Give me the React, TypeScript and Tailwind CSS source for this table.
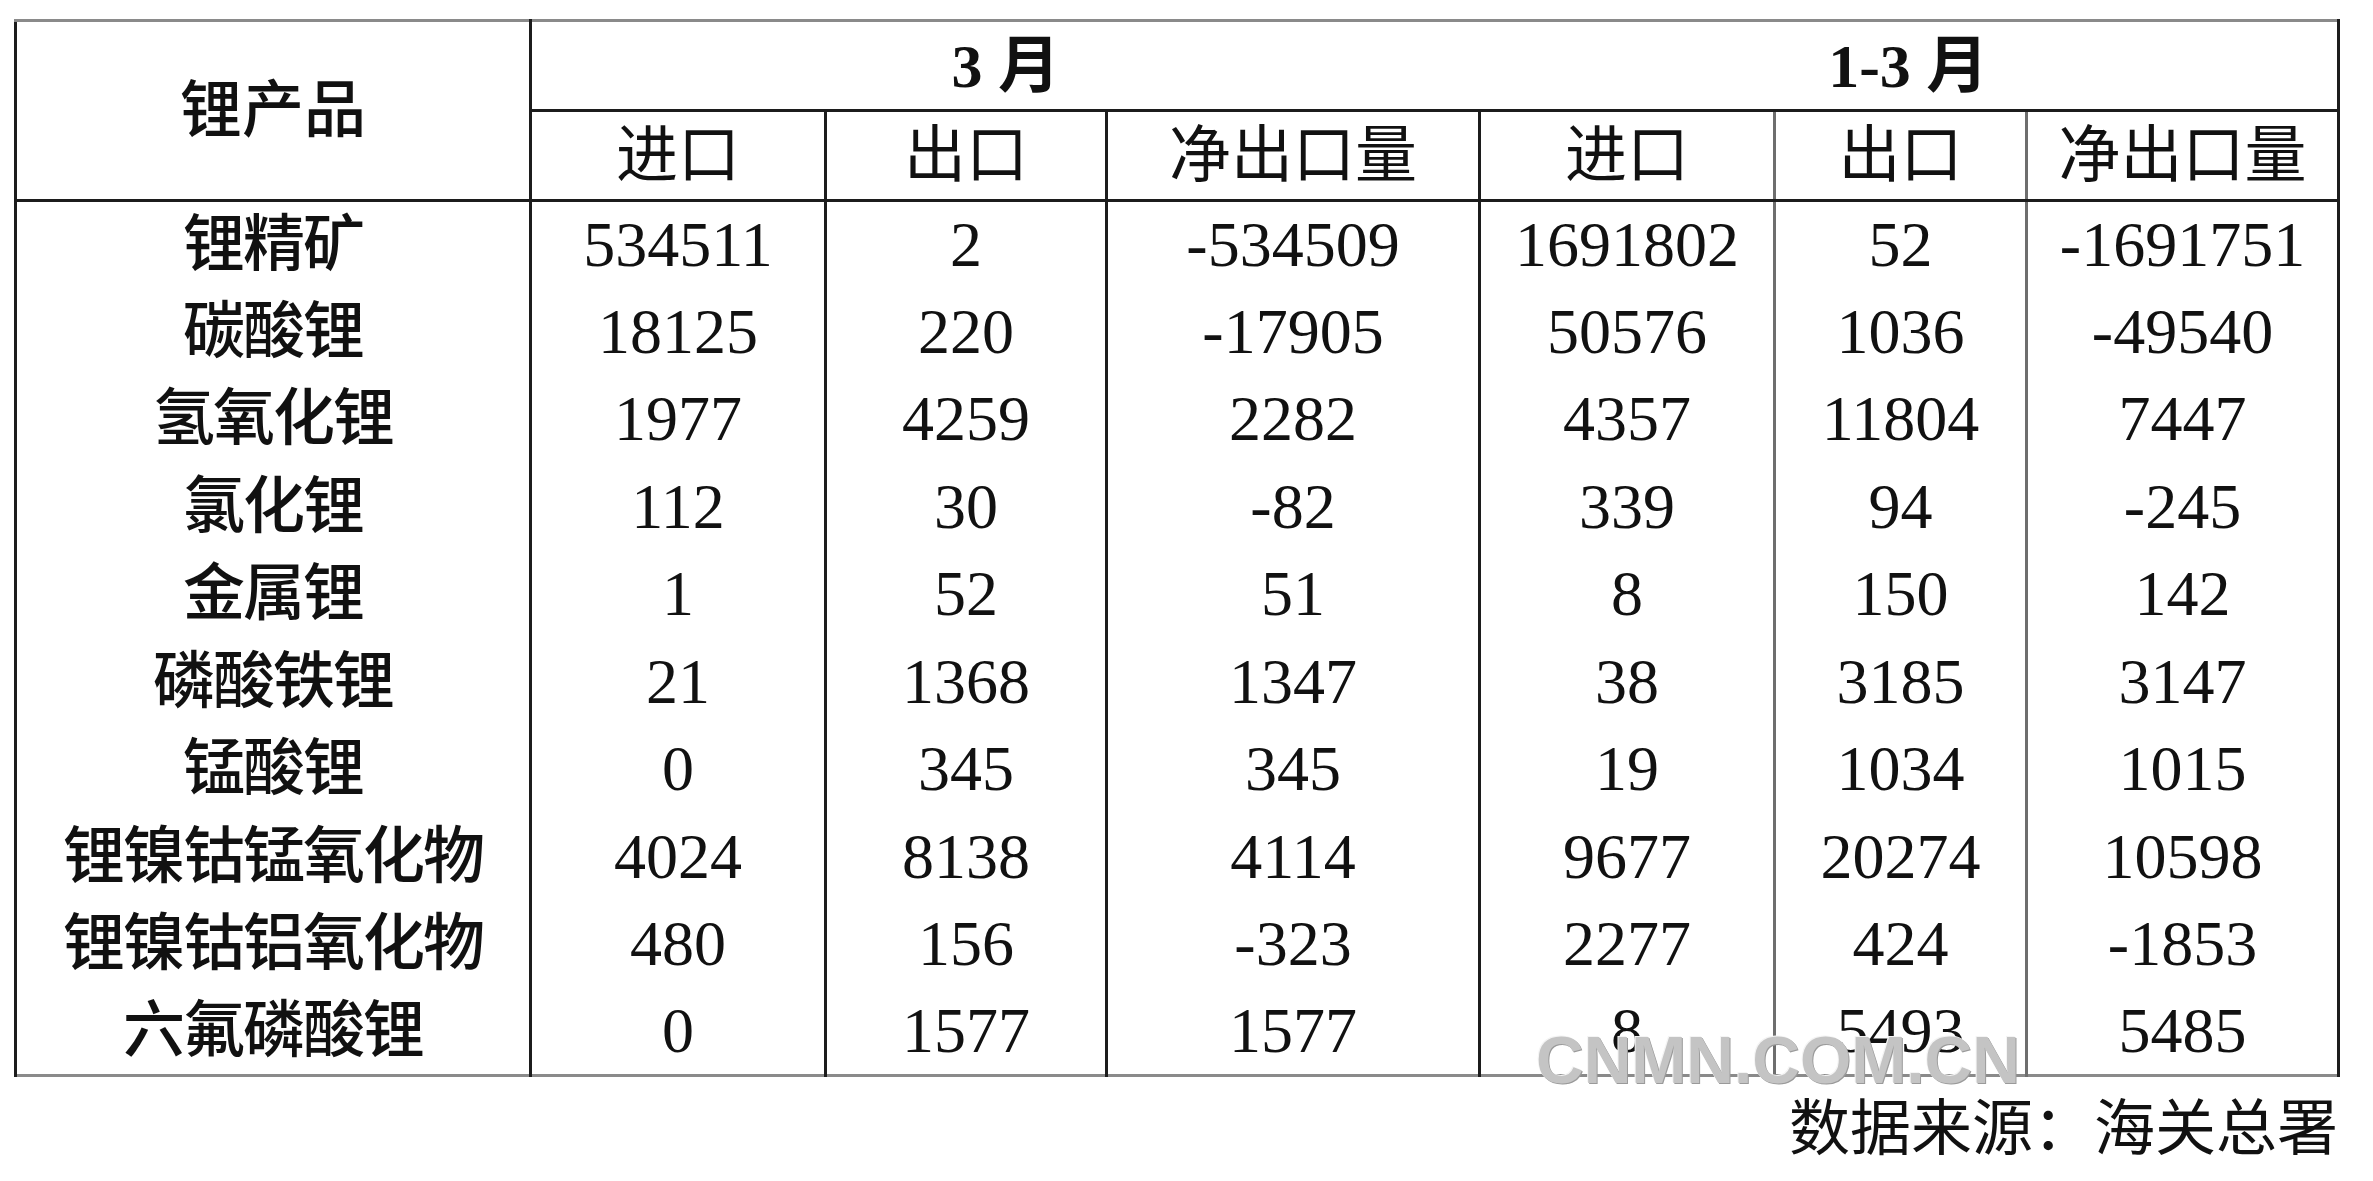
const rows = [
  ["锂精矿", "534511", "2", "-534509", "1691802", "52", "-1691751"],
  ["碳酸锂", "18125", "220", "-17905", "50576", "1036", "-49540"],
  ["氢氧化锂", "1977", "4259", "2282", "4357", "11804", "7447"],
  ["氯化锂", "112", "30", "-82", "339", "94", "-245"],
  ["金属锂", "1", "52", "51", "8", "150", "142"],
  ["磷酸铁锂", "21", "1368", "1347", "38", "3185", "3147"],
  ["锰酸锂", "0", "345", "345", "19", "1034", "1015"],
  ["锂镍钴锰氧化物", "4024", "8138", "4114", "9677", "20274", "10598"],
  ["锂镍钴铝氧化物", "480", "156", "-323", "2277", "424", "-1853"],
  ["六氟磷酸锂", "0", "1577", "1577", "8", "5493", "5485"],
]

const widths = ["w-[515px]", "w-[295px]", "w-[281px]", "w-[373px]", "w-[295px]", "w-[252px]", "w-[312px]"]

// vertical rule after each column
const vline = [
  "border-r-[3px] border-r-[#1c1c1c]",
  "border-r-[3px] border-r-[#1c1c1c]",
  "border-r-[3px] border-r-[#1c1c1c]",
  "border-r-[3px] border-r-[#1c1c1c]",
  "border-r-[3px] border-r-[#6e6e6e]",
  "border-r-[3px] border-r-[#6e6e6e]",
  "border-r-[3px] border-r-[#1c1c1c]",
]

const subHeads = ["进口", "出口", "净出口量", "进口", "出口", "净出口量"]

export default function App() {
  return (
    <div className="relative min-h-[1181px] w-[2373px] bg-white text-[#111] font-['Liberation_Serif','Noto_Sans_CJK_SC',serif]">
      <div className="pt-[19px] pl-[14px]">
        <table className="table-fixed border-collapse w-[2324px]">
          <colgroup>
            {widths.map((w, i) => (
              <col key={i} className={w} />
            ))}
          </colgroup>
          <thead>
            <tr className="h-[90px]">
              <th
                rowSpan={2}
                className="border-l-[3px] border-l-[#1c1c1c] border-t-[3px] border-t-[#8a8a8a] border-r-[3px] border-r-[#1c1c1c] border-b-[3px] border-b-[#1c1c1c] text-[62px] font-medium leading-none align-middle"
              >
                锂产品
              </th>
              <th
                colSpan={3}
                className="border-t-[3px] border-t-[#8a8a8a] border-b-[3px] border-b-[#1c1c1c] text-[62px] font-bold leading-none align-middle"
              >
                3 月
              </th>
              <th
                colSpan={3}
                className="border-t-[3px] border-t-[#8a8a8a] border-r-[3px] border-r-[#1c1c1c] border-b-[3px] border-b-[#1c1c1c] text-[62px] font-bold leading-none align-middle"
              >
                1-3 月
              </th>
            </tr>
            <tr className="h-[90px]">
              {subHeads.map((h, i) => (
                <th
                  key={i}
                  className={`${vline[i + 1]} border-b-[3px] border-b-[#1c1c1c] text-[62px] font-normal leading-none align-middle`}
                >
                  {h}
                </th>
              ))}
            </tr>
          </thead>
          <tbody>
            {rows.map((r, ri) => (
              <tr
                key={ri}
                className={`h-[87.5px] ${ri === rows.length - 1 ? "border-b-[3px] border-b-[#8a8a8a]" : ""}`}
              >
                {r.map((c, ci) => (
                  <td
                    key={ci}
                    className={`${vline[ci]} ${ci === 0 ? "border-l-[3px] border-l-[#1c1c1c] text-[62px] font-medium tracking-[-2px]" : "text-[64px]"} text-center leading-none align-middle whitespace-nowrap`}
                  >
                    {c}
                  </td>
                ))}
              </tr>
            ))}
          </tbody>
        </table>
        <div className="w-[2324px] pt-[22px] text-right text-[61px] leading-none font-normal">
          数据来源：海关总署
        </div>
      </div>

      {/* watermark */}
      <div className="absolute left-[1536px] top-[1027px] text-[66px] leading-none font-bold text-[#c4c4c4] font-['Liberation_Sans',Arial,sans-serif] [text-shadow:1px_1px_0_#9a9a9a,-1px_-1px_0_#f4f4f4]">
        CNMN.COM.CN
      </div>
    </div>
  )
}
